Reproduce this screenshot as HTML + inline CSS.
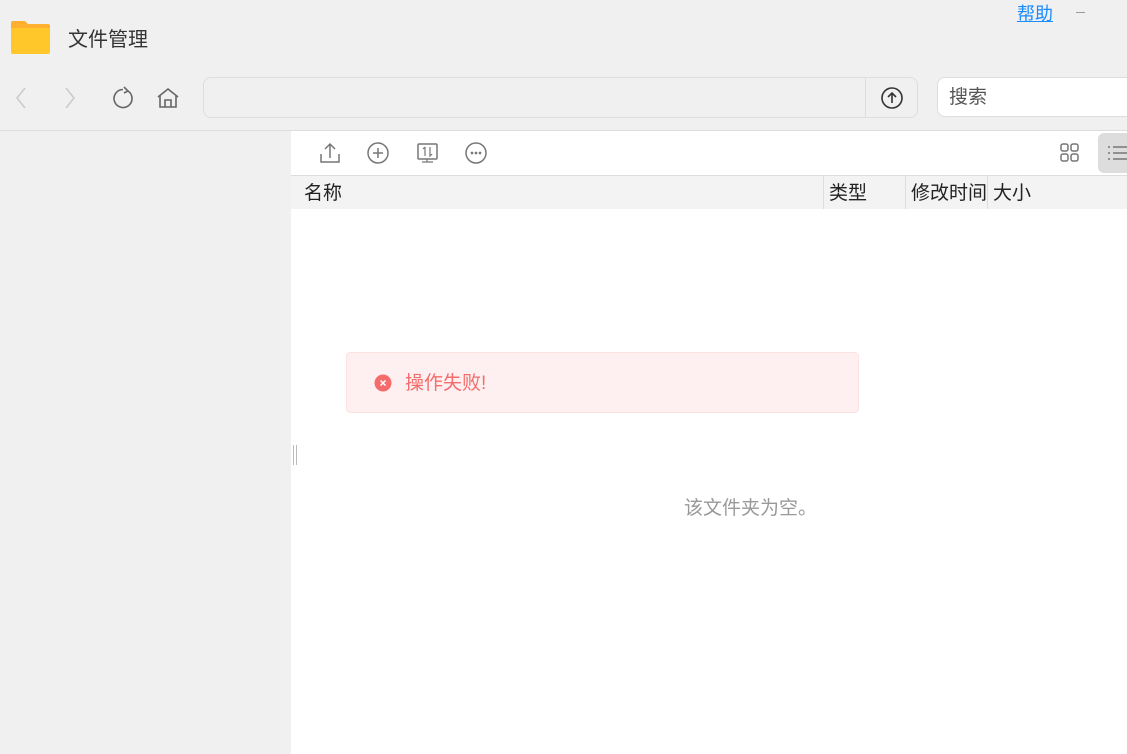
<!DOCTYPE html>
<html><head><meta charset="utf-8"><style>
*{margin:0;padding:0;box-sizing:border-box}
body{width:1127px;height:754px;overflow:hidden;background:#f0f0f0;font-family:"Liberation Sans","Noto Sans CJK SC",sans-serif;position:relative;color:#333}
.a{position:absolute}
</style></head><body>
<svg class="a" style="left:10px;top:20px" width="41" height="35" viewBox="0 0 41 35"><path d="M1 3 Q1 1 3 1 H15 L18 4 H38 Q40 4 40 6 V10 H1Z" fill="#ffb02e"/><path d="M1 8 H40 V32 Q40 34 38 34 H3 Q1 34 1 32Z" fill="#ffc72a"/></svg>
<div class="a" style="left:68px;top:23px;font-size:20px;color:#333">文件管理</div>
<div class="a" style="left:1017px;top:0px;font-size:18px;color:#1a8cff;text-decoration:underline">帮助</div>
<div class="a" style="left:1076px;top:12px;width:9px;height:1px;background:#999"></div>
<svg class="a" style="left:10px;top:85px" width="180" height="26" fill="none" stroke-width="1.6">
<path d="M15 3 L7 13 L15 23" stroke="#ccc"/>
<path d="M56 3 L64 13 L56 23" stroke="#ccc"/>
<path d="M113 4.5 A9 9 0 1 0 118 6" stroke="#666"/><path d="M114 2 L118 6 L114 8" stroke="#666"/>
<path d="M148 12 L158 4 L168 12 M150 11 V22 H166 V11 M155 22 V15 H161 V22" stroke="#666"/>
</svg>
<div class="a" style="left:203px;top:77px;width:715px;height:41px;border:1px solid #ddd;border-radius:8px;background:#f0f0f0"></div>
<div class="a" style="left:865px;top:78px;width:1px;height:39px;background:#ddd"></div>
<svg class="a" style="left:880px;top:86px" width="24" height="24" fill="none" stroke="#333" stroke-width="1.6"><circle cx="12" cy="12" r="10"/><path d="M12 17 V7 M8 11 L12 7 L16 11"/></svg>
<div class="a" style="left:937px;top:77px;width:200px;height:40px;border:1px solid #ddd;border-radius:8px;background:#fff;padding:4px 11px;font-size:19px;color:#555">搜索</div>
<div class="a" style="left:0;top:130px;width:1127px;height:1px;background:#ddd"></div>
<div class="a" style="left:291px;top:131px;width:836px;height:623px;background:#fff"></div>
<svg class="a" style="left:318px;top:141px" width="180" height="24" fill="none" stroke="#777" stroke-width="1.5">
<path d="M3 13 V21 H21 V13 M12 17 V3 M7 8 L12 3 L17 8"/>
<circle cx="60" cy="12" r="10"/><path d="M55 12 H65 M60 7 V17"/>
<rect x="100" y="3" width="19" height="15" rx="1"/><path d="M104 21 H115 M109 18 V21 M107 6 V15 M107 6 L105 8 M112 6 V15 L114 13" stroke-width="1.2"/>
<circle cx="158" cy="12" r="10"/><circle cx="154" cy="12" r=".6"/><circle cx="158" cy="12" r=".6"/><circle cx="162" cy="12" r=".6"/>
</svg>
<svg class="a" style="left:1059px;top:142px" width="22" height="22" fill="none" stroke="#777" stroke-width="1.5"><rect x="2" y="2" width="7" height="7" rx="2"/><rect x="12" y="2" width="7" height="7" rx="2"/><rect x="2" y="12" width="7" height="7" rx="2"/><rect x="12" y="12" width="7" height="7" rx="2"/></svg>
<div class="a" style="left:1098px;top:133px;width:40px;height:40px;background:#ddd;border-radius:6px"></div>
<svg class="a" style="left:1108px;top:144px" width="20" height="18" stroke="#777" stroke-width="1.5"><path d="M0 3 H2 M5 3 H20 M0 9 H2 M5 9 H20 M0 15 H2 M5 15 H20"/></svg>
<div class="a" style="left:291px;top:175px;width:836px;height:1px;background:#ddd"></div>
<div class="a" style="left:291px;top:176px;width:836px;height:33px;background:#f3f3f3"></div>
<div class="a" style="left:823px;top:176px;width:1px;height:33px;background:#ddd"></div>
<div class="a" style="left:905px;top:176px;width:1px;height:33px;background:#ddd"></div>
<div class="a" style="left:987px;top:176px;width:1px;height:33px;background:#ddd"></div>
<div class="a" style="left:304px;top:178px;font-size:19px;color:#222">名称</div>
<div class="a" style="left:829px;top:178px;font-size:19px;color:#222">类型</div>
<div class="a" style="left:911px;top:178px;font-size:19px;color:#222">修改时间</div>
<div class="a" style="left:993px;top:178px;font-size:19px;color:#222">大小</div>
<div class="a" style="left:346px;top:352px;width:513px;height:61px;background:#fef0f0;border:1px solid #fde2e2;border-radius:4px"></div>
<svg class="a" style="left:374px;top:374px" width="18" height="18"><circle cx="9" cy="9" r="8.5" fill="#f56c6c"/><path d="M6.5 6.5 L11.5 11.5 M11.5 6.5 L6.5 11.5" stroke="#fff" stroke-width="1.5"/></svg>
<div class="a" style="left:405px;top:368px;font-size:19px;color:#f56c6c">操作失败!</div>
<div class="a" style="left:293px;top:445px;width:4px;height:20px;border-left:1px solid #bbb;border-right:1px solid #bbb"></div>
<div class="a" style="left:684px;top:493px;font-size:19px;color:#999">该文件夹为空。</div>
</body></html>
